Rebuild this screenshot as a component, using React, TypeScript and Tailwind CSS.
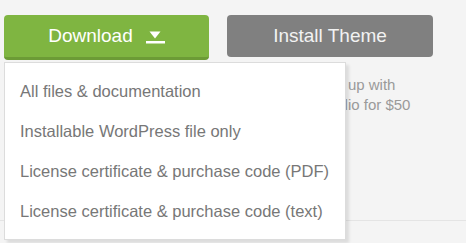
const downloadOptions = [
  "All files & documentation",
  "Installable WordPress file only",
  "License certificate & purchase code (PDF)",
  "License certificate & purchase code (text)",
]

function DownloadIcon() {
  return (
    <svg width="19" height="14" viewBox="0 0 19 14" className="mt-[2px]" aria-hidden="true">
      <path d="M3.5 1.5h11L9 8.5z" fill="currentColor" />
      <rect x="0" y="11" width="19" height="2.5" fill="currentColor" />
    </svg>
  )
}

export default function App() {
  return (
    <div className="min-h-[243px] bg-[#f4f4f4] font-['Liberation_Sans',Arial,sans-serif]">
      <div className="h-[221px] border-b border-[#e4e4e4] pl-[4px] pt-[15px]">
        <div className="flex gap-[18px]">
          <div className="relative">
            <button className="flex h-[45px] w-[205px] items-center justify-center gap-[13px] rounded-[4px] border-b-[3px] border-[#6c9b36] bg-[#7fb541] text-[19px] text-white">
              Download
              <DownloadIcon />
            </button>

            {/* menu */}
            <ul className="absolute left-0 top-[47px] z-10 w-[342px] border border-[#dcdcdc] bg-white py-[8px] shadow-[3px_3px_3px_rgba(0,0,0,0.1)]">
              {downloadOptions.map((option) => (
                <li key={option} className="flex h-[40px] items-center whitespace-nowrap pl-[15px] text-[16.5px] text-[#777]">
                  {option}
                </li>
              ))}
            </ul>
          </div>

          <div className="w-[206px]">
            <button className="h-[42px] w-full rounded-[4px] bg-[#808080] text-[19px] text-[#f2f2f2]">
              Install Theme
            </button>
            <p className="mt-[18px] whitespace-nowrap text-center text-[15px] leading-[20px] text-[#9a9a9a]">
              Get it all set up with
              <br />
              at Envato Studio for $50
            </p>
          </div>
        </div>
      </div>
    </div>
  )
}
